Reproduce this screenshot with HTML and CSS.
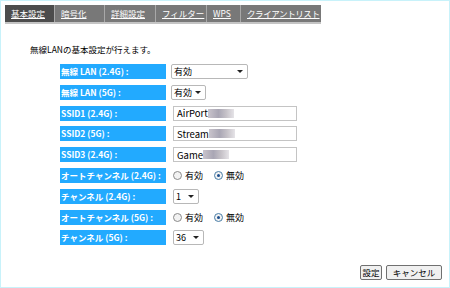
FILE: index.html
```html
<!DOCTYPE html>
<html lang="ja">
<head>
  <meta charset="UTF-8">
  <title>基本設定</title>
  <link rel="stylesheet" href="styles.css">
</head>
<body>
  <div class="frame">
    <div class="tabs">
      <a class="tab active" style="width:50px">基本設定</a>
      <a class="tab" style="width:50px">暗号化</a>
      <a class="tab" style="width:51px">詳細設定</a>
      <a class="tab" style="width:51px">フィルター</a>
      <a class="tab" style="width:34px">WPS</a>
      <a class="tab last">クライアントリスト</a>
    </div>

    <p class="desc">無線LANの基本設定が行えます。</p>

    <div class="form">
      <div class="label">無線 LAN (2.4G) :</div>
      <div class="field"><span class="select wide">有効</span></div>

      <div class="label">無線 LAN (5G) :</div>
      <div class="field"><span class="select">有効</span></div>

      <div class="label">SSID1 (2.4G) :</div>
      <div class="field"><span class="text">AirPort<i class="blur"></i></span></div>

      <div class="label">SSID2 (5G) :</div>
      <div class="field"><span class="text">Stream<i class="blur"></i></span></div>

      <div class="label">SSID3 (2.4G) :</div>
      <div class="field"><span class="text">Game<i class="blur"></i></span></div>

      <div class="label">オートチャンネル (2.4G) :</div>
      <div class="field radios">
        <span class="radio"></span>有効
        <span class="radio on"></span>無効
      </div>

      <div class="label">チャンネル (2.4G) :</div>
      <div class="field"><span class="select small">1</span></div>

      <div class="label">オートチャンネル (5G) :</div>
      <div class="field radios">
        <span class="radio"></span>有効
        <span class="radio on"></span>無効
      </div>

      <div class="label">チャンネル (5G) :</div>
      <div class="field"><span class="select mid">36</span></div>
    </div>

    <div class="actions">
      <button class="ok">設定</button>
      <button class="cancel">キャンセル</button>
    </div>
  </div>
</body>
</html>
```

FILE: styles.css
```css
body {
  margin: 0;
  font-family: "Noto Sans CJK JP", "Liberation Sans", sans-serif;
  font-size: 10px;
  color: #000;
  background: #fff;
}
.frame {
  box-sizing: border-box;
  width: 450px;
  height: 288px;
  border: 1px solid #c8f2fa;
  padding: 4px 0 0 4px;
  position: relative;
}
.tabs {
  display: flex;
  width: max-content;
  height: 17px;
  background: #787878;
  border-bottom: 2px solid #c4c4c4;
}
.tab {
  box-sizing: border-box;
  height: 17px;
  line-height: 17px;
  padding-left: 6px;
  color: #fff;
  text-decoration: underline;
  font-size: 8.5px;
  border-right: 1px solid #a8a8a8;
  white-space: nowrap;
}
.tab.active {
  background: #4c4c4c;
}
.tab.last {
  border-right: none;
  padding-right: 1px;
  letter-spacing: -0.4px;
}
.desc {
  margin: 19px 0 0 25px;
  font-size: 8.5px;
  line-height: 12px;
}
.form {
  display: grid;
  grid-template-columns: 106px auto;
  grid-auto-rows: 15px;
  row-gap: 5.8px;
  column-gap: 5px;
  margin: 9px 0 0 55px;
}
.label {
  background: #22aaff;
  color: #fff;
  font-weight: bold;
  font-size: 8.5px;
  line-height: 15px;
  padding-left: 1px;
  white-space: nowrap;
}
.field {
  display: flex;
  align-items: center;
}
.select {
  box-sizing: border-box;
  display: inline-flex;
  align-items: center;
  position: relative;
  width: 35px;
  height: 15px;
  padding-left: 2px;
  border: 1px solid #b8b8b8;
  border-radius: 2px;
  background: #fff;
  font-size: 9px;
}
.select::after {
  content: "";
  position: absolute;
  right: 4px;
  top: 5px;
  border-left: 3px solid transparent;
  border-right: 3px solid transparent;
  border-top: 3px solid #222;
}
.select.wide { width: 77px; }
.select.small { width: 26px; margin-left: 2px; }
.select.mid { width: 31px; margin-left: 2px; }
.text {
  box-sizing: border-box;
  display: inline-flex;
  align-items: center;
  width: 124px;
  height: 15px;
  margin-left: 2px;
  padding-left: 3px;
  border: 1px solid #c4c4c4;
  font-size: 9.5px;
}
.blur {
  display: inline-block;
  width: 26px;
  height: 9px;
  background: linear-gradient(90deg, #c9c4cc, #a9a6b4 40%, #c6c2c8 70%, #e6e4e8);
}
.radios {
  gap: 3px;
  padding-left: 2px;
  font-size: 9px;
}
.radio {
  box-sizing: border-box;
  width: 9px;
  height: 9px;
  border: 1px solid #8a8a8a;
  border-radius: 50%;
  background: #f2f2f2;
  position: relative;
}
.radio.on {
  margin-left: 8px;
  border-color: #4a7fa8;
}
.radio.on::after {
  content: "";
  position: absolute;
  left: 2px;
  top: 2px;
  width: 3px;
  height: 3px;
  border-radius: 50%;
  background: #1b4e8c;
}
.actions {
  position: absolute;
  right: 7px;
  bottom: 7px;
  display: flex;
  gap: 4px;
}
button {
  box-sizing: border-box;
  height: 15px;
  padding: 0;
  font-family: inherit;
  font-size: 8.5px;
  line-height: 11px;
  white-space: nowrap;
  background: #f0f0f0;
  border: 1px solid #707070;
  border-radius: 2px;
}
.ok {
  width: 22px;
}
.cancel {
  width: 56px;
}
```
